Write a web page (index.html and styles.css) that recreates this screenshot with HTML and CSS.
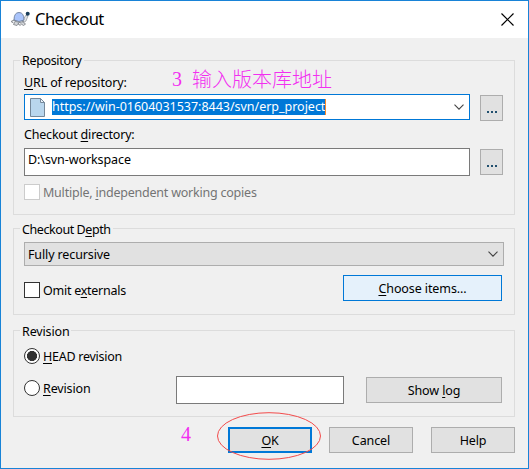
FILE: index.html
```
<!DOCTYPE html>
<html lang="en">
<head>
<meta charset="utf-8">
<title>Checkout</title>
<link rel="stylesheet" href="styles.css">
</head>
<body>
<div class="window">
  <header class="titlebar">
    <svg class="turtle" width="20" height="16" viewBox="0 0 20 16">
      <path d="M3 9.500l-2 1 2.500 1.500M5 11l-1.500 2.500 3.500 1 2-2.500M13 11l2.500 2-2 1.500-3-2M8 12l1 2h2" fill="#d5d8dc" stroke="#83878c" stroke-width=".9"/>
      <path d="M13 9l3-5 2 1-2 5-3 2z" fill="#dfe2e6" stroke="#90959b" stroke-width=".7"/>
      <path d="M4 9Q4 1.500 9 1.500T14 9Q9 12 4 9z" fill="#aac4fb" stroke="#6d7f9d" stroke-width=".9"/>
      <path d="M3 9q6 4 11 1" fill="none" stroke="#858a91" stroke-width="1.200"/>
      <circle cx="17.700" cy="2.800" r="2" fill="#173b59"/>
    </svg>
    <h1 class="title">Checkout</h1>
    <svg class="close" width="13" height="13" viewBox="0 0 13 13"><path d="M.5.5l12 12M12.500.5l-12 12" stroke="#000" stroke-width="1.200"/></svg>
  </header>
  <main class="content">
    <section class="group repository">
      <h2 class="legend"><span class="t-repo">Repository</span></h2>
      <div class="label-row">
        <label class="t-url"><u>U</u>RL of repository:</label>
        <span class="note note-url"><span class="num">3</span><span class="han">输入版本库地址</span></span>
      </div>
      <div class="row">
        <div class="combo url">
          <svg class="file" width="15" height="19" viewBox="0 0 15 19"><path d="M.5.5h10l4 4v14h-14z" fill="#b9d6ed" stroke="#75889a"/><path d="M10.500.5v4h4z" fill="#e8f2fa" stroke="#75889a"/></svg>
          <span class="selected"><span class="t-addr">https://win-01604031537:8443/svn/erp_project</span></span>
          <svg class="chevron" width="10" height="6" viewBox="0 0 10 6"><path d="M.5.7L5 5.200 9.500.7" fill="none" stroke="#444" stroke-width="1.100"/></svg>
        </div>
        <button class="btn more"><i></i><i></i><i></i></button>
      </div>
      <label class="dir-label t-dir">Checkout <u>d</u>irectory:</label>
      <div class="row">
        <div class="field dir"><span class="t-path">D:\svn-workspace</span></div>
        <button class="btn more"><i></i><i></i><i></i></button>
      </div>
      <label class="option multi"><span class="box off"></span><span class="text t-multi">Multiple, <u>i</u>ndependent working copies</span></label>
    </section>
    <section class="group depth">
      <h2 class="legend"><span class="t-depth">Checkout D<u>e</u>pth</span></h2>
      <div class="combo level"><span class="text t-full">Fully recursive</span>
        <svg class="chevron" width="10" height="6" viewBox="0 0 10 6"><path d="M.5.7L5 5.200 9.500.7" fill="none" stroke="#444" stroke-width="1.100"/></svg>
      </div>
      <div class="depth-row">
        <label class="option"><span class="box"></span><span class="text t-omit">Omit e<u>x</u>ternals</span></label>
        <button class="btn choose"><span class="text t-choose"><u>C</u>hoose items...</span></button>
      </div>
    </section>
    <section class="group revision">
      <h2 class="legend"><span class="t-rev">Revision</span></h2>
      <label class="option head"><span class="radio on"></span><span class="text t-head"><u>H</u>EAD revision</span></label>
      <div class="rev-row">
        <label class="option rev"><span class="radio"></span><span class="text t-rev"><u>R</u>evision</span></label>
        <div class="field number"></div>
        <button class="btn log"><span class="text t-log">Show <u>l</u>og</span></button>
      </div>
    </section>
    <footer class="actions">
      <span class="note num four">4</span>
      <button class="btn ok"><span class="text t-ok"><u>O</u>K</span>
        <svg class="ring" width="106" height="50" viewBox="0 0 106 50"><ellipse cx="53" cy="25" rx="51.500" ry="23.300" fill="none" stroke="#f34b4b" stroke-width="1"/></svg>
      </button>
      <button class="btn cancel"><span class="text t-cancel">Cancel</span></button>
      <button class="btn help"><span class="text t-help">Help</span></button>
    </footer>
  </main>
</div>
</body>
</html>
```
FILE: styles.css
```
* { box-sizing: border-box; }
body { margin: 0; font: 12.5px/16px "Noto Sans", sans-serif; color: #000; }
u { text-decoration: underline; text-decoration-thickness: 1px; text-underline-offset: 2px; text-decoration-skip-ink: none; }
svg { display: block; flex: none; }
.window { width: 529px; height: 469px; border: 1px solid #1883d7; background: #f0f0f0; white-space: nowrap; }
.titlebar { display: flex; align-items: center; height: 37px; padding: 0 14px 0 9px; background: #fff; }
.title { margin: -2px auto 0 5px; font-size: 16.5px; font-weight: 400; line-height: 24px; letter-spacing: -.5px; }
.turtle { margin-top: -1px; }
.content { padding: 22px 13px 0 12px; }
.group { position: relative; border: 1px solid #dcdcdc; padding: 0 10px; }
.legend { position: absolute; left: 6px; top: -8px; margin: 0; padding: 0 2px; background: #f0f0f0; font-size: 12.5px; font-weight: 400; line-height: 17px; }
.repository { height: 155px; padding-top: 11px; }
.repository .legend { top: -9px; }
.label-row { display: flex; align-items: center; height: 22px; }
.row { display: flex; gap: 10px; align-items: flex-start; }
.combo, .field { display: flex; align-items: center; border: 1px solid #7a7a7a; background: #fff; }
.url { width: 446px; height: 26px; padding: 0 5px; border-color: #0078d7; }
.chevron { margin-left: auto; }
.selected { display: block; height: 16px; margin-left: 7px; background: #0078d7; border-right: 1px solid #ff8728; color: #fff; }
.selected span { display: block; }
.text { padding-top: 2px; }
.btn { position: relative; display: flex; align-items: center; justify-content: center; height: 26px; padding: 0; border: 1px solid #adadad; background: #e1e1e1; font: inherit; color: #000; }
.more { width: 23px; margin-top: 1px; gap: 2px; }
.more i { width: 2px; height: 2px; margin-top: 8px; background: #21506f; }
.dir-label { display: block; height: 27px; padding-top: 6px; }
.dir { width: 446px; height: 28px; padding: 0 3px 5px; }
.option { display: flex; align-items: center; gap: 3px; height: 16px; }
.multi { margin-top: 8px; color: #747474; }
.box { width: 16px; height: 16px; border: 1px solid #333; background: #fff; }
.off { border-color: #ccc; }
.depth { height: 87px; margin-top: 13px; padding-top: 13px; }
.level { width: 480px; height: 24px; padding: 0 5px 0 3px; border-color: #adadad; background: #e1e1e1; }
.depth-row { display: flex; justify-content: space-between; margin: 9px 2px 0 0; }
.depth-row .option { margin-top: 7px; }
.choose { width: 159px; border-color: #0078d7; background: #e5f1fb; }
.revision { height: 87px; margin-top: 15px; padding-top: 17px; }
.radio { width: 16px; height: 16px; border: 1px solid #333; border-radius: 50%; background: #fff; }
.on { background: radial-gradient(circle, #333 4.800px, #fff 5.300px); }
.rev-row { display: flex; align-items: center; margin-top: 12px; }
.rev { width: 152px; margin-top: -4px; }
.number { width: 168px; height: 28px; }
.log { width: 136px; margin-left: 22px; }
.actions { display: flex; margin-top: 10px; }
.note { color: #f22ff0; }
.num { font: 20px/20px "Liberation Serif", serif; }
.note-url { display: flex; align-items: center; margin: -8px 0 0 45px; }
.note-url .num { width: 10px; }
.han { margin-left: 10px; font: 300 20px/20px "Noto Sans CJK SC", sans-serif; }
.four { width: 215px; padding-left: 168px; margin-top: -3px; }
.ok, .cancel, .help { width: 84px; }
.ok { border: 2px solid #0078d7; }
.cancel { margin-left: 17px; }
.help { margin-left: 18px; }
.ring { position: absolute; left: -14px; top: -18px; }

/* Tahoma-like widths for each label */
.t-repo { letter-spacing: -.34px; }
.t-url { width: 103px; letter-spacing: -.14px; }
.t-addr { letter-spacing: -.02px; }
.t-dir { letter-spacing: -.2px; }
.t-path { letter-spacing: -.08px; }
.t-multi { letter-spacing: -.22px; }
.t-depth { letter-spacing: -.42px; }
.t-full { letter-spacing: -.12px; }
.t-omit, .t-head { letter-spacing: -.26px; }
.t-choose { letter-spacing: -.1px; }
.t-rev { letter-spacing: -.15px; }
.t-log { letter-spacing: -.1px; }
.t-ok, .t-help { letter-spacing: -.2px; }
.t-cancel { letter-spacing: -.1px; }
```
